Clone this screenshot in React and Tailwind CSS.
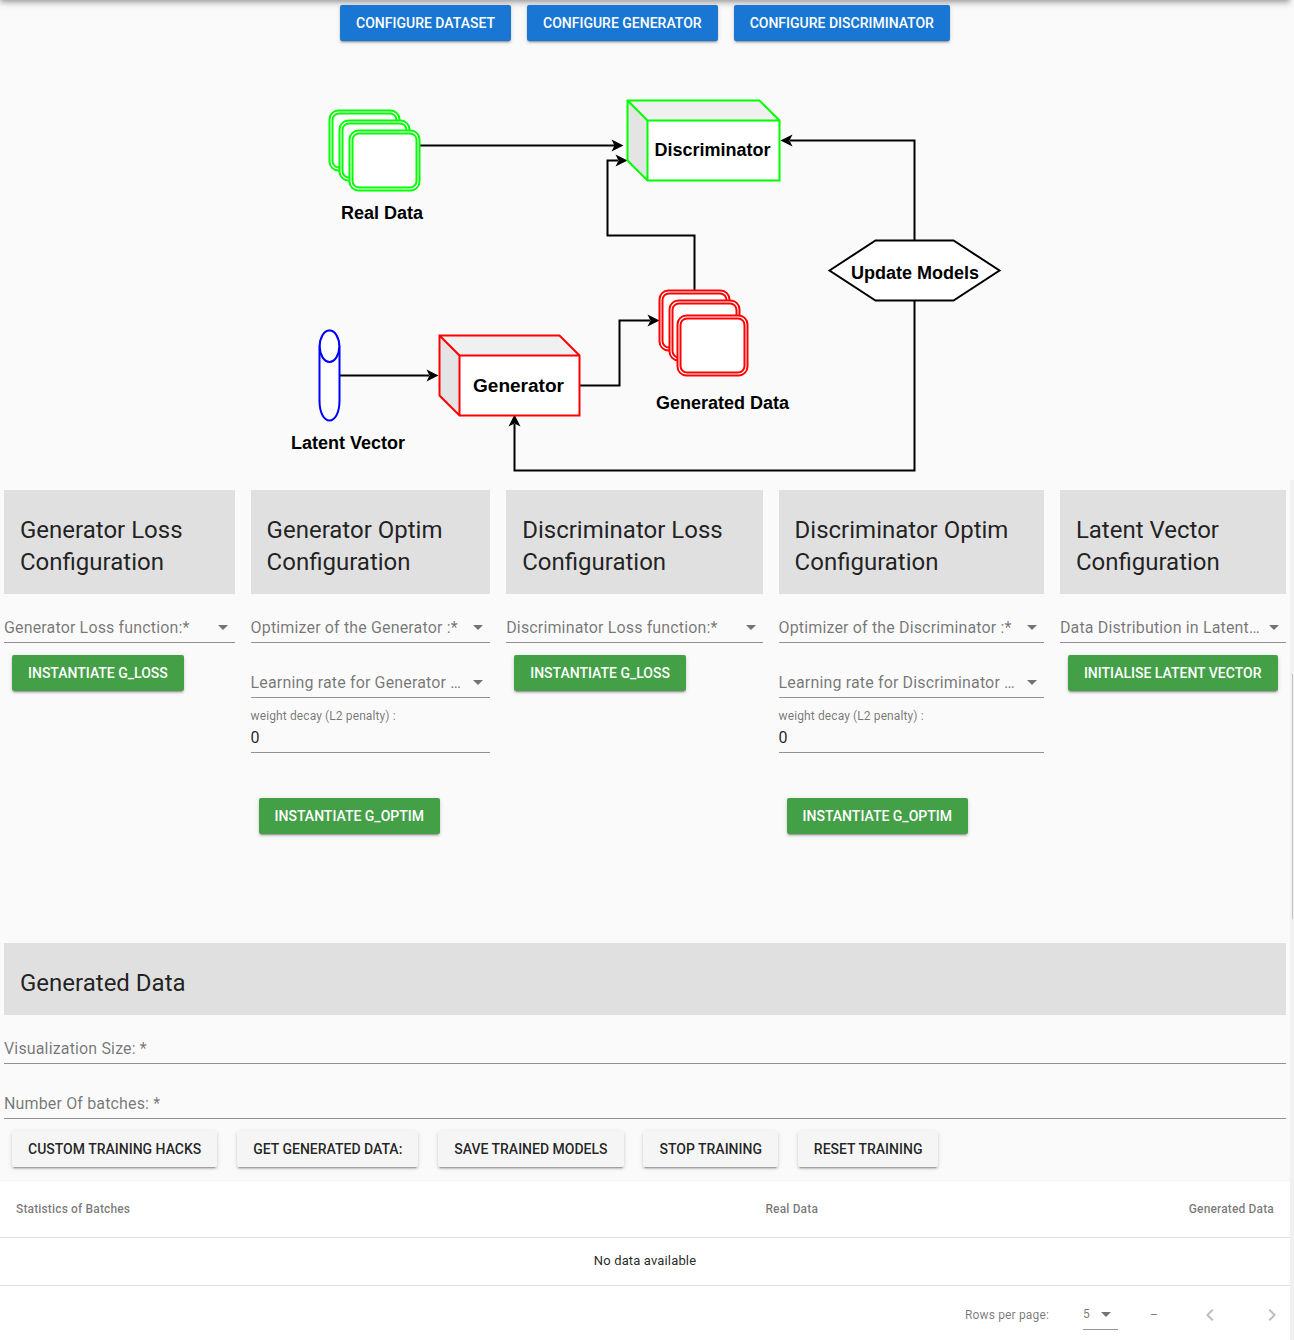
import React from "react";

const RAISED =
  "shadow-[0_3px_1px_-2px_rgba(0,0,0,0.2),0_2px_2px_0_rgba(0,0,0,0.14),0_1px_5px_0_rgba(0,0,0,0.12)]";

const TONES = {
  blue: "bg-[#1976d2] text-white",
  green: "bg-[#43a047] text-white",
  light: "bg-[#f5f5f5] text-black/87",
};

function Button({ tone, children }) {
  return (
    <button
      className={`flex h-9 shrink-0 items-center justify-center rounded-xs px-4 text-sm font-medium tracking-normal whitespace-nowrap uppercase ${RAISED} ${TONES[tone]}`}
    >
      {children}
    </button>
  );
}

function Caret() {
  return (
    <svg className="h-6 w-6 shrink-0 fill-black/54" viewBox="0 0 24 24">
      <path d="M7 10l5 5 5-5z" />
    </svg>
  );
}

function Title({ children }) {
  return (
    <h2 className="bg-[#e0e0e0] px-4 pt-6 pb-4 text-2xl leading-8 font-normal tracking-normal text-black/87">
      {children}
    </h2>
  );
}

function Select({ label }) {
  return (
    <div className="mt-[22px] flex h-[33px] items-center border-b border-black/42 pt-0.5 first-of-type:mt-4">
      <span className="min-w-0 flex-1 pt-0.5 text-base leading-6 whitespace-nowrap text-black/54">
        {label}
      </span>
      <Caret />
    </div>
  );
}

function TextField({ label }) {
  return (
    <div className="flex h-[33px] items-center border-b border-black/42 pt-1 text-base text-black/54">
      {label}
    </div>
  );
}

function WeightDecay() {
  return (
    <div className="flex h-[55px] flex-col border-b border-black/42 pt-2">
      <span className="text-xs leading-5 tracking-[0.11px] text-black/54">
        weight decay (L2 penalty) :
      </span>
      <span className="text-base leading-6 text-black/87">0</span>
    </div>
  );
}

function LossPanel({ title, label, action }) {
  return (
    <section>
      <Title>{title}</Title>
      <Select label={label} />
      <div className="mt-3 flex px-2">
        <Button tone="green">{action}</Button>
      </div>
    </section>
  );
}

function OptimPanel({ title, label, rate }) {
  return (
    <section>
      <Title>{title}</Title>
      <Select label={label} />
      <Select label={rate} />
      <WeightDecay />
      <div className="mt-[45px] flex px-2">
        <Button tone="green">Instantiate G_Optim</Button>
      </div>
    </section>
  );
}

function Card({ x, y, color }) {
  return (
    <g fill="#fff" stroke={color} strokeWidth="2">
      <rect x={x} y={y} width="70" height="60" rx="9" />
      <rect x={x + 3} y={y + 3} width="64" height="54" rx="6.5" />
    </g>
  );
}

function Cube({ x, y, w, color }) {
  const outline = `M${x} ${y}h${w - 20}l20 20v60h${20 - w}l-20-20z`;
  return (
    <g>
      <path d={outline} fill="#fff" />
      <path d={`M${x} ${y}h${w - 20}l20 20h${20 - w}z`} fill="#f0f0f0" />
      <path d={`M${x} ${y}l20 20v60l-20-20z`} fill="#e4e4e4" />
      <path
        d={`${outline}M${x + 20} ${y + 80}v-60l-20-20M${x + 20} ${y + 20}h${w - 20}`}
        fill="none"
        stroke={color}
        strokeWidth="2"
      />
    </g>
  );
}

function Arrow({ x, y, angle = 0 }) {
  return (
    <path d="M0 0L-12 6L-9 0L-12-6Z" fill="#000" transform={`translate(${x} ${y}) rotate(${angle})`} />
  );
}

function Label({ x, y, width, children }) {
  return (
    <text
      transform={`translate(${x} ${y}) scale(1 1.06)`}
      textLength={width}
      lengthAdjust="spacingAndGlyphs"
    >
      {children}
    </text>
  );
}

function Diagram() {
  return (
    <svg
      className="block h-[449px] w-[1290px] font-['Liberation_Sans',Arial,sans-serif] text-lg font-bold tracking-normal"
      viewBox="0 41 1290 449"
    >
      <g fill="none" stroke="#000" strokeWidth="2">
        <path d="M420 145.5H615" />
        <path d="M694.5 290V235.5H607.5V160.5H618" />
        <path d="M914.5 240V140.5H790" />
        <path d="M914.5 301V470.5H514.5V424" />
        <path d="M340 375.5H429" />
        <path d="M580 385.5H619.5V320.5H650" />
      </g>
      <Arrow x={623.5} y={145.5} />
      <Arrow x={627.5} y={160.5} />
      <Arrow x={780.5} y={140.5} angle={180} />
      <Arrow x={514.5} y={414.5} angle={-90} />
      <Arrow x={438.5} y={375.5} />
      <Arrow x={659.5} y={320.5} />

      <Card x={329.5} y={110.5} color="#00ff00" />
      <Card x={339.5} y={120.5} color="#00ff00" />
      <Card x={349.5} y={130.5} color="#00ff00" />
      <Card x={659.5} y={290.5} color="#ff0000" />
      <Card x={669.5} y={300.5} color="#ff0000" />
      <Card x={677.5} y={315.5} color="#ff0000" />

      <Cube x={627.5} y={100.5} w={152} color="#00ff00" />
      <Cube x={439.5} y={335.5} w={140} color="#ff0000" />

      <g fill="#fff" stroke="#0000ff" strokeWidth="2">
        <path d="M319.5 350.5C319.5 324 339.5 324 339.5 350.5V400.5C339.5 427 319.5 427 319.5 400.5Z" />
        <ellipse cx="329.5" cy="346.3" rx="9.8" ry="15.7" />
      </g>
      <path
        d="M829.5 270.5L875.5 240.5H953.5L999.5 270.5L953.5 300.5H875.5Z"
        fill="#fff"
        stroke="#000"
        strokeWidth="2"
      />

      <g fill="#000" textAnchor="middle">
        <Label x={712.5} y={156} width={116}>Discriminator</Label>
        <Label x={382} y={219} width={82}>Real Data</Label>
        <Label x={518.5} y={392} width={91}>Generator</Label>
        <Label x={348} y={449} width={114}>Latent Vector</Label>
        <Label x={915} y={279} width={128}>Update Models</Label>
        <Label x={722.5} y={409} width={133}>Generated Data</Label>
      </g>
    </svg>
  );
}

function Chevron({ d }) {
  return (
    <svg className="h-6 w-6 fill-black/26" viewBox="0 0 24 24">
      <path d={d} />
    </svg>
  );
}

function StatsTable() {
  return (
    <div className="border-t border-black/5 bg-white text-xs text-black/54">
      <div className="flex h-14 items-center px-4 font-medium">
        <span className="w-[320px]">Statistics of Batches</span>
        <span className="w-[482px] text-right">Real Data</span>
        <span className="flex-1 text-right">Generated Data</span>
      </div>
      <div className="flex h-12 items-center justify-center border-t border-black/12 pb-0.5 text-[13px] text-black/87">
        No data available
      </div>
      <div className="flex h-[55px] items-center border-t border-black/12 pt-1 pr-1.5">
        <span className="ml-auto">Rows per page:</span>
        <div className="mt-[-3px] ml-[34px] flex h-8 w-[35px] items-center justify-between border-b border-black/42 pt-0.5">
          <span>5</span>
          <Caret />
        </div>
        <span className="ml-8">–</span>
        <span className="ml-10">
          <Chevron d="M15.41 7.41L14 6l-6 6 6 6 1.41-1.41L10.83 12z" />
        </span>
        <span className="ml-[38px]">
          <Chevron d="M10 6L8.59 7.41 13.17 12l-4.58 4.59L10 18l6-6z" />
        </span>
      </div>
    </div>
  );
}

export default function App() {
  return (
    <div className="relative flex h-[1340px] w-[1294px] overflow-hidden bg-[#fafafa] font-[Roboto,sans-serif] tracking-[0.15px]">
      <div className="absolute -top-10 left-0 h-10 w-[1290px] shadow-[0_2px_4px_-1px_rgba(0,0,0,0.2),0_4px_5px_0_rgba(0,0,0,0.14),0_1px_10px_0_rgba(0,0,0,0.12)]" />
      <main className="relative w-[1290px] shrink-0">
        <div className="flex h-[41px] items-end justify-center gap-4">
          <Button tone="blue">Configure Dataset</Button>
          <Button tone="blue">Configure Generator</Button>
          <Button tone="blue">Configure Discriminator</Button>
        </div>

        <Diagram />

        <div className="grid h-[453px] grid-cols-[230.6px_239.6px_256.4px_265.3px_226.1px] gap-x-4 px-1">
          <LossPanel
            title="Generator Loss Configuration"
            label="Generator Loss function:*"
            action="Instantiate G_Loss"
          />
          <OptimPanel
            title="Generator Optim Configuration"
            label="Optimizer of the Generator :*"
            rate="Learning rate for Generator …"
          />
          <LossPanel
            title="Discriminator Loss Configuration"
            label="Discriminator Loss function:*"
            action="Instantiate G_Loss"
          />
          <OptimPanel
            title="Discriminator Optim Configuration"
            label="Optimizer of the Discriminator :*"
            rate="Learning rate for Discriminator …"
          />
          <LossPanel
            title="Latent Vector Configuration"
            label="Data Distribution in Latent…"
            action="Initialise Latent Vector"
          />
        </div>

        <section className="px-1">
          <Title>Generated Data</Title>
          <div className="mt-4 flex flex-col gap-[22px]">
            <TextField label="Visualization Size: *" />
            <TextField label="Number Of batches: *" />
          </div>
          <div className="mt-3 mb-[13px] flex gap-[19.9px] px-2">
            <Button tone="light">Custom Training Hacks</Button>
            <Button tone="light">Get Generated Data:</Button>
            <Button tone="light">Save Trained Models</Button>
            <Button tone="light">Stop Training</Button>
            <Button tone="light">Reset Training</Button>
          </div>
        </section>

        <StatsTable />
      </main>
      <div className="mt-[480px] flex w-1 flex-col items-end bg-[#f1f1f1] pt-[194px] pr-px">
        <div className="h-[245px] w-px bg-[#c1c1c1]" />
      </div>
    </div>
  );
}
